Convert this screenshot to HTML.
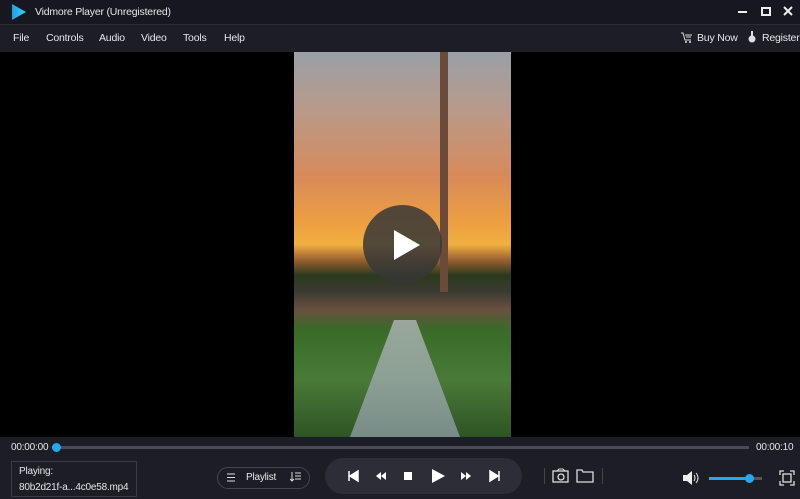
<!DOCTYPE html><html><head><style>
body{margin:0;width:800px;height:499px;background:#1c1d25;font-family:"Liberation Sans",sans-serif;color:#e6e6e6;position:relative;overflow:hidden}
.a{position:absolute}
.t{font-size:10.5px;letter-spacing:-0.2px}
</style></head><body>
<div class="a" style="left:0;top:0;width:800px;height:24px;background:#17181f"></div>
<svg class="a" style="left:11px;top:3px" width="16" height="18"><defs><linearGradient id="g" x1="0" x2="1"><stop offset="0" stop-color="#1f9fe8"/><stop offset="1" stop-color="#3ad0f0"/></linearGradient></defs><path d="M1 1 L15 9 L1 17 Z" fill="url(#g)"/></svg>
<div class="a t" style="left:35px;top:6px">Vidmore Player (Unregistered)</div>
<div class="a" style="left:738px;top:11px;width:9px;height:2px;background:#eee"></div>
<div class="a" style="left:761px;top:7px;width:6px;height:5px;border:2px solid #eee"></div>
<svg class="a" style="left:783px;top:6px" width="10" height="10"><path d="M1 1L9 9M9 1L1 9" stroke="#eee" stroke-width="2"/></svg>
<div class="a" style="left:0;top:24px;width:800px;height:1px;background:#2b2c35"></div>
<div class="a t" style="left:13px;top:32px">File</div>
<div class="a t" style="left:46px;top:32px">Controls</div>
<div class="a t" style="left:99px;top:32px">Audio</div>
<div class="a t" style="left:141px;top:32px">Video</div>
<div class="a t" style="left:183px;top:32px">Tools</div>
<div class="a t" style="left:224px;top:32px">Help</div>
<svg class="a" style="left:681px;top:32px" width="12" height="11"><path d="M0 1h2l2 7h6M4 3h7M5 5h5" stroke="#ddd" fill="none"/><circle cx="5" cy="10" r="1" fill="#ddd"/><circle cx="9" cy="10" r="1" fill="#ddd"/></svg>
<div class="a t" style="left:697px;top:32px">Buy Now</div>
<svg class="a" style="left:748px;top:31px" width="8" height="12"><rect x="3" y="0" width="2" height="6" fill="#ddd"/><circle cx="4" cy="8" r="3.5" fill="#ddd"/></svg>
<div class="a t" style="left:762px;top:32px">Register</div>
<div class="a" style="left:0;top:52px;width:800px;height:385px;background:#000"></div>
<div class="a" style="left:294px;top:52px;width:217px;height:385px;background:linear-gradient(#9aa0a8 0%,#b89a8a 15%,#d88a5a 32%,#eea040 45%,#f0b040 50%,#9a6030 54%,#2a3a1c 58%,#3a3a30 62%,#6a5040 67%,#3a6a28 72%,#4a7a38 85%,#2e5424 100%)"></div>
<div class="a" style="left:350px;top:320px;width:110px;height:117px;background:linear-gradient(#b0b8b8,#8a9aa0);clip-path:polygon(40% 0,60% 0,100% 100%,0 100%);opacity:.8"></div>
<div class="a" style="left:440px;top:52px;width:8px;height:240px;background:#6a4a38"></div>
<div class="a" style="left:363px;top:205px;width:79px;height:79px;border-radius:50%;background:rgba(55,55,55,.85)"></div>
<svg class="a" style="left:392px;top:228px" width="30" height="34"><path d="M2 2 L28 17 L2 32 Z" fill="#fff"/></svg>
<div class="a t" style="left:11px;top:442px;font-size:10px">00:00:00</div>
<div class="a" style="left:56px;top:446px;width:693px;height:3px;background:#4a4b52"></div>
<div class="a" style="left:52px;top:443px;width:9px;height:9px;border-radius:50%;background:#24a8f0"></div>
<div class="a t" style="left:756px;top:442px;font-size:10px">00:00:10</div>
<div class="a" style="left:11px;top:461px;width:124px;height:34px;border:1px solid #3a3b44"></div>
<div class="a t" style="left:19px;top:466px;font-size:10px">Playing:</div>
<div class="a t" style="left:19px;top:482px;font-size:10px">80b2d21f-a...4c0e58.mp4</div>
<div class="a" style="left:217px;top:467px;width:91px;height:20px;border:1px solid #44454e;border-radius:11px"></div>
<svg class="a" style="left:227px;top:473px" width="8" height="9"><path d="M0 1h8M0 4.5h8M0 8h8" stroke="#ddd"/></svg>
<div class="a t" style="left:246px;top:472px;font-size:10px">Playlist</div>
<svg class="a" style="left:290px;top:472px" width="11" height="10"><path d="M2 0v9M0 7l2 2 2-2M5 1h6M5 4h6M5 7h6" stroke="#ddd" fill="none"/></svg>
<div class="a" style="left:325px;top:458px;width:197px;height:36px;border-radius:18px;background:#2c2d36"></div>
<svg class="a" style="left:340px;top:466px" width="170" height="20">
<path d="M9 5v10M18 5l-8 5 8 5z" fill="#fff" stroke="#fff" stroke-width="1.5"/>
<path d="M41 6l-5 4 5 4zM46 6l-5 4 5 4z" fill="#fff"/>
<rect x="64" y="6" width="8" height="8" fill="#fff"/>
<path d="M92 3l13 7-13 7z" fill="#fff"/>
<path d="M121 6l5 4-5 4zM126 6l5 4-5 4z" fill="#fff"/>
<path d="M150 5l8 5-8 5zM159 5v10" fill="#fff" stroke="#fff" stroke-width="1.5"/>
</svg>
<div class="a" style="left:544px;top:468px;width:1px;height:16px;background:#444"></div>
<div class="a" style="left:602px;top:468px;width:1px;height:16px;background:#444"></div>
<svg class="a" style="left:552px;top:468px" width="44" height="16"><rect x="1" y="3" width="15" height="11" fill="none" stroke="#ddd" stroke-width="1.3"/><circle cx="9" cy="9" r="3" fill="none" stroke="#ddd" stroke-width="1.3"/><path d="M5 3l2-2h4l2 2" stroke="#ddd" fill="none"/><path d="M25 2h5l1 2h10v10h-16z" fill="none" stroke="#ddd" stroke-width="1.3"/></svg>
<svg class="a" style="left:682px;top:471px" width="18" height="14"><path d="M1 4h4l5-4v14l-5-4h-4z" fill="#eee"/><path d="M12 4q2 3 0 6M14 2q4 5 0 10" stroke="#eee" fill="none"/></svg>
<div class="a" style="left:709px;top:477px;width:53px;height:3px;background:#555"></div>
<div class="a" style="left:709px;top:477px;width:41px;height:3px;background:#24a8f0"></div>
<div class="a" style="left:745px;top:474px;width:9px;height:9px;border-radius:50%;background:#24a8f0"></div>
<svg class="a" style="left:779px;top:470px" width="16" height="16"><path d="M1 5V1h4M11 1h4v4M15 11v4h-4M5 15H1v-4" stroke="#ddd" fill="none" stroke-width="1.3"/><rect x="4" y="4" width="8" height="8" fill="none" stroke="#ddd" stroke-width="1.3"/></svg>
</body></html>
